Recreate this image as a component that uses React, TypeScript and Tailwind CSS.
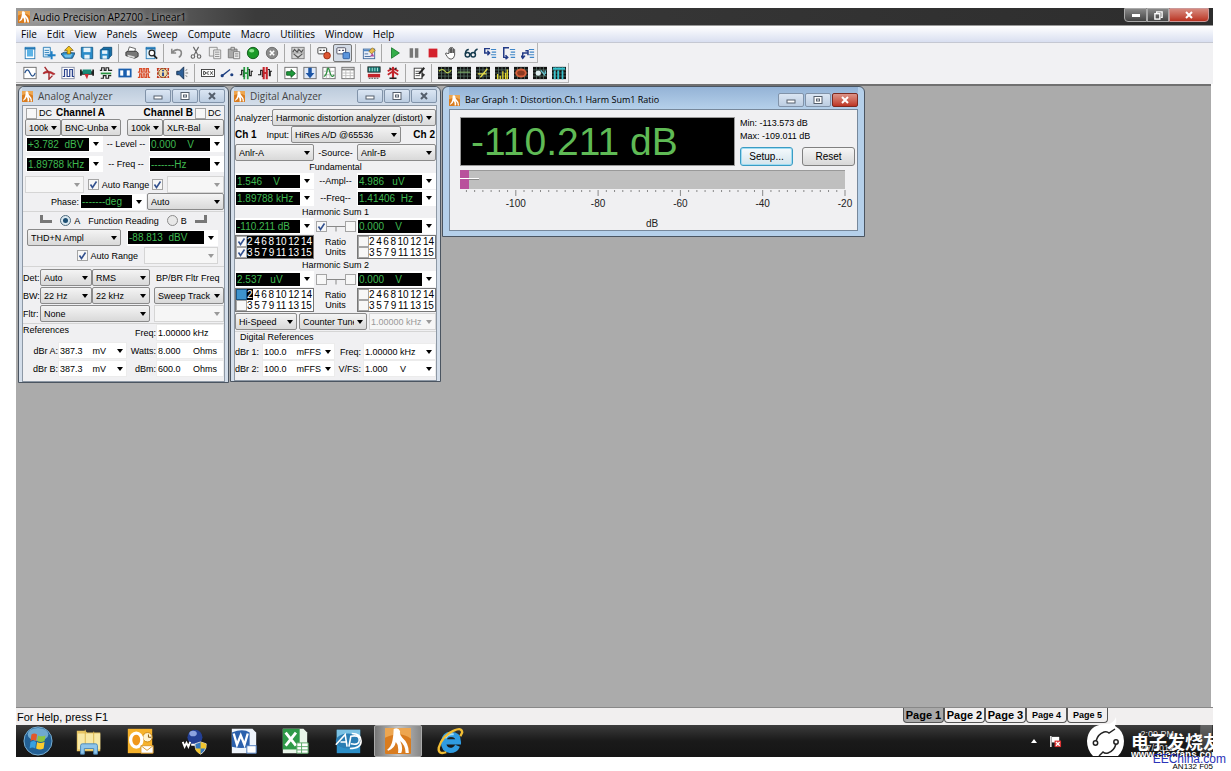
import { FC, ReactNode } from "react";

/* ---------- toolbar glyphs, all drawn on a 16x16 grid ---------- */

const Frame: FC<{ fill?: string, stroke?: string, children?: ReactNode }> = ({ fill = "#fff", stroke = "#666", children }) => (
  <g fill="none">
    <rect x="1" y="1.5" width="14" height="13" fill={fill} stroke={stroke} />
    {children}
  </g>
);

const Scope: FC<{ children: ReactNode }> = ({ children }) => (
  <g fill="none">
    <rect x="0" y="1" width="16" height="14" fill="#111" />
    <path d="M0 4.5h16M0 8h16M0 11.5h16M4 1v14M8 1v14M12 1v14" stroke="#5d7a6c" strokeWidth=".8" />
    {children}
  </g>
);

const Steps: FC<{ arrow: string }> = ({ arrow }) => (
  <g fill="none">
    <path d="M9 4h6M10 7h5M9 10h6M10 13h5" stroke="#3f86c8" strokeWidth="1.4" />
    <path d={arrow} stroke="#223a86" strokeWidth="1.7" />
  </g>
);

const glyphs: Record<string, ReactNode> = {
  New: <g><rect x="2.5" y="1.5" width="11" height="13" fill="#fff" stroke="#2378b5" /><rect x="4.5" y="4" width="7" height="8" fill="#5bb3e6" /><path d="M2 3h12" stroke="#2378b5" strokeWidth="2" /></g>,
  "New test": <g><path d="M1.5 1.5h8v11h-8z" fill="#dff1fb" stroke="#2378b5" /><path d="M3 5h5M3 7.500h5M3 10h4" stroke="#2378b5" /><path d="M11 6v9M6.500 10.500h9" stroke="#1f7fc4" strokeWidth="2.200" /></g>,
  Open: <g><path d="M0 9l4-2 12 1-3 6H4z" fill="#2b8cc9" stroke="#1b4e78" /><path d="M3 10l10-1-2 4H5z" fill="#6fc1ec" /><path d="M9 0l5 5h-3v4H7V5H4z" fill="#f3c21b" stroke="#6f550c" strokeWidth=".8" /></g>,
  Save: <g><path d="M1.500 1.500h13v13h-11l-2-2z" fill="#2b8cc9" stroke="#155c8d" /><rect x="4" y="2" width="8" height="5" fill="#e5f3fb" /><rect x="5" y="10" width="6" height="4.500" fill="#e5f3fb" /></g>,
  "Save all": <g><path d="M5 1.500h9.500v9l-3 3V4.500H2z" fill="#176ea6" stroke="#0f4d78" /><path d="M1.500 4.500h10v10h-10z" fill="#2b8cc9" stroke="#155c8d" /><rect x="3.500" y="5" width="6" height="4" fill="#e5f3fb" /><rect x="4" y="11" width="5" height="3.500" fill="#e5f3fb" /></g>,
  Print: <g><path d="M5 1l7 2-1 4H3z" fill="#fff" stroke="#555" /><path d="M1 7l3-1h9l2 2v4l-4 2-10-3z" fill="#777" stroke="#333" /><path d="M3 10l8 2v2l-8-2z" fill="#ddd" /></g>,
  Preview: <g><rect x="2.500" y="1.500" width="10" height="13" fill="#dff1fb" stroke="#2378b5" /><path d="M2 3h11" stroke="#2378b5" strokeWidth="2" /><circle cx="9" cy="8" r="3.200" fill="#fff" stroke="#222" strokeWidth="1.400" /><path d="M11 10.500l4 4" stroke="#222" strokeWidth="2" /></g>,
  Undo: <path d="M2 3v5h5M2.500 7.500C6 3 13 3 13 8c0 2-1 4-3 5" fill="none" stroke="#888" strokeWidth="1.800" />,
  Cut: <g fill="none" stroke="#666" strokeWidth="1.300"><path d="M5 1l5 9M11 1L6 10" /><circle cx="4.500" cy="12" r="2" /><circle cx="11.500" cy="12" r="2" /></g>,
  Copy: <g fill="#eee" stroke="#888"><path d="M1.500 1.500h9v10h-9z" /><path d="M6.500 4.500h8v10h-8z" /><path d="M8 7h5M8 9.500h5M8 12h5" /></g>,
  Paste: <g fill="#aaa" stroke="#777"><path d="M1.500 3.500h10v10h-10z" /><path d="M4.500 1.500h4v3h-4z" fill="#ccc" /><path d="M7.500 6.500h7v8h-7z" fill="#eee" /><path d="M9 9h4M9 11.500h4" /></g>,
  Record: <g><circle cx="8" cy="8" r="6.500" fill="#1c9a28" stroke="#0c5315" /><ellipse cx="6.500" cy="5.500" rx="3" ry="2" fill="#8fe38f" /></g>,
  Cancel: <g><circle cx="8" cy="8" r="6.500" fill="#8b8b8b" stroke="#666" /><path d="M5.500 5.500l5 5M10.500 5.500l-5 5" stroke="#fff" strokeWidth="1.800" /></g>,
  Regulate: <Frame fill="#d4d4d4" stroke="#777"><path d="M1 8h14M8 2v6" stroke="#999" /><path d="M2 7l2-3 3 3 2-3 3 3 2-3M3 9l5 4 5-4" stroke="#555" strokeWidth="1.400" /></Frame>,
  "Learn macro": <g><rect x="1" y="2" width="10" height="7" rx="1" fill="#fff" stroke="#333" /><path d="M3 5h2M7 5h2" stroke="#333" strokeWidth="1.500" /><circle cx="11.500" cy="11" r="3.800" fill="#dc5633" stroke="#9a2d14" /></g>,
  "Edit macro": <g><rect x="1" y="2" width="10" height="7" rx="1" fill="#fff" stroke="#445" /><path d="M3 5h2M7 5h2" stroke="#335" strokeWidth="1.500" /><rect x="8" y="7.500" width="7.500" height="7" rx="1" fill="#5c95dc" stroke="#2b5a9e" /></g>,
  Properties: <g><rect x="1.500" y="3.500" width="13" height="11" fill="#e8eef8" stroke="#3c6599" /><path d="M2 5h12" stroke="#4d86c5" strokeWidth="2" /><path d="M3 9h4M3 12h7" stroke="#3c6599" /><path d="M8 6l4-4 3 3-4 4z" fill="#e8bd4e" stroke="#8a6a1c" strokeWidth=".8" /><path d="M9 12l3-4 2 4z" fill="#b04a9c" /></g>,
  Run: <path d="M4 2l9 6-9 6z" fill="#35ae4a" stroke="#1c7a2f" />,
  Pause: <path d="M3 2.500h4v11H3zM9 2.500h4v11H9z" fill="#777" />,
  Stop: <rect x="3" y="3" width="10" height="10" fill="#d4202c" />,
  Hand: <path d="M4.500 8.500V3.500q1-1.500 1.500 0V8 2q1-1.500 1.700 0v6V2.500q1-1.500 1.700 0V8 4q1-1.300 1.600 0v6.500q-.5 4-4 4.500-3 .2-4.500-3l-2-3q.2-2 2-.5z" fill="#fff" stroke="#444" />,
  Watch: <g fill="none" stroke="#163b4e" strokeWidth="1.700"><circle cx="4" cy="10" r="2.600" /><circle cx="10.500" cy="10" r="2.600" /><path d="M1.500 9Q2 4 5.500 4M12.500 9q-1-4 3-5.500M6.500 9.500h1.500" /></g>,
  "Step into": <Steps arrow="M8 3H2v5h5M5 5.500L7.500 8 5 10.500" />,
  "Step out": <Steps arrow="M8 2H2v11h4M4 10.500L6.500 13 4 15" />,
  "Step over": <Steps arrow="M8 8H2v6M5 5.500h3v5M0 11l2 3 2.500-3" />,
  "Analog generator": <Frame><path d="M2 8q3-7 6 0t6 0" stroke="#234f8c" strokeWidth="1.400" /></Frame>,
  "Analog analyzer": <g><path d="M1 8Q6 3 15 9l-2 1Q7 6 2 9z" fill="#c4272c" stroke="#8f1d20" strokeWidth=".6" /><path d="M3 1l5 7v7l4-4" stroke="#a3292c" strokeWidth="1.600" fill="none" /></g>,
  "Digital generator": <Frame stroke="#8088a0"><path d="M2 12h2V4h3v8h3V4h3v8h2" stroke="#29418c" strokeWidth="1.400" /></Frame>,
  "Digital analyzer": <g><path d="M0 4h2v2h12V4h2v7h-2v-1H2v1H0z" fill="#222" /><rect x="3" y="4" width="10" height="5" fill="#1a8a78" /><path d="M5 9l3 6 2-6" fill="#d12c33" /></g>,
  "Digital I/O": <g fill="none"><path d="M1 5h2V2h3v3h2V2h3v3h4" stroke="#222" strokeWidth="1.300" /><path d="M2 8.500h12" stroke="#27913f" strokeWidth="2" /><path d="M2 14h3v-3h3v3h3v-3h3" stroke="#222" strokeWidth="1.300" /></g>,
  Sync: <g fill="#fff" stroke="#1b5fae" strokeWidth="2"><rect x="1.500" y="4" width="5.500" height="8" /><rect x="9" y="4" width="5.500" height="8" /></g>,
  Jitter: <g fill="none" stroke="#d94d2a" strokeWidth="1.400"><path d="M1 7h2V3h2v4h2V3h2v4h2V3h2v4h2" /><path d="M1 13h2V9h2v4h2V9h2v4h2V9h2v4h2" /></g>,
  Status: <g><path d="M1 3h14M1 13h14M2 3v10M14 3v10" stroke="#c43b22" strokeWidth="1.700" strokeDasharray="3 1" /><circle cx="8" cy="8" r="5" fill="#f0d9a6" stroke="#82501b" /><path d="M8 4.500v1.500M8 7.500v4" stroke="#1c3d94" strokeWidth="2" /></g>,
  Speaker: <g><path d="M2 6h3l5-5v14l-5-5H2z" fill="#2e5f97" stroke="#142f50" /><path d="M12 5l2-1M12 8h3M12 11l2 1" stroke="#666" /></g>,
  DCX: <g fill="none" stroke="#333"><rect x=".5" y="4" width="15" height="8" fill="#fff" /><path d="M3 6v4q2.500-.5 2.500-2T3 6M9 6.500q-2.500 0-2.500 1.500T9 9.500M10.500 6l3 4M13.500 6l-3 4" /></g>,
  Switcher: <g><circle cx="2.500" cy="11" r="1.800" fill="#1d3f80" /><circle cx="13.500" cy="10" r="1.800" fill="#1d3f80" /><path d="M2.500 11l9-7" stroke="#1d3f80" strokeWidth="1.500" /></g>,
  "Compute left": <g fill="none"><path d="M1 10h2V5h2v7h2M10 4h2v7h2V6h2" stroke="#222" strokeWidth="1.300" /><path d="M6 1v14M10 1v14M6 8h4" stroke="#26983f" strokeWidth="2" /></g>,
  "Compute right": <g fill="none"><path d="M0 10h3V5h2v7h1M11 4h2v7h1V6h2" stroke="#222" strokeWidth="1.300" /><path d="M6.500 1v14M10 1v14M6 8h4" stroke="#c4242b" strokeWidth="2.400" /></g>,
  Sweep: <Frame><path d="M3 6.500h5V4l5 4.500L8 13v-2.500H3z" fill="#1d9a3b" stroke="#0e5a20" /></Frame>,
  Settling: <Frame fill="#dfe9f8"><path d="M6 2h4v6h3l-5 6-5-6h3z" fill="#1c55a5" /></Frame>,
  Graph: <Frame><path d="M5 2v12M9 2v12M2 6h12M2 10h12" stroke="#bbb" /><path d="M2 12q3-1 4-7t3 2 5 3" stroke="#2c8f3e" strokeWidth="1.400" /></Frame>,
  "Data editor": <Frame><path d="M1 4h14" stroke="#888" strokeWidth="2" /><path d="M5.500 4v10M10.500 4v10M1 8h14M1 11h14" stroke="#bbb" /></Frame>,
  "Bar graph": <g><rect x="1" y="1" width="14" height="6" fill="#167d78" stroke="#222" /><path d="M3 2v4M6 2v4M9 2v4M12 2v4" stroke="#bfe8e4" /><path d="M1 11h14" stroke="#c4242b" strokeWidth="4" /><path d="M2 14h12" stroke="#333" strokeDasharray="2 1" /></g>,
  Attached: <g fill="none"><path d="M8 1v14" stroke="#c4242b" strokeWidth="2.500" /><path d="M2 6q6-5 12 0M2 10l6-4 6 4" stroke="#c4242b" strokeWidth="2" /><path d="M4 2l2 2M12 2l-2 2M4 14h8" stroke="#222" strokeWidth="1.500" /></g>,
  "Log file": <g><rect x="2.500" y="2.500" width="9" height="12" fill="#fff" stroke="#333" /><path d="M4 6h5M4 8.500h5M4 11h5" stroke="#444" /><path d="M14 2L8 9" stroke="#222" strokeWidth="2.200" /><path d="M11 7l4 3-4 4z" fill="#333" /></g>,
  "Quick sweep 1": <Scope><path d="M1 6q4-4 7 0t7-1" stroke="#c2d44e" strokeWidth="1.300" /></Scope>,
  "Quick sweep 2": <Scope><path d="M1 7h14" stroke="#7faf68" strokeWidth="1.300" /></Scope>,
  "Quick sweep 3": <Scope><path d="M2 9h10M5 13l8-10" stroke="#ece34e" strokeWidth="1.600" /></Scope>,
  "Quick sweep 4": <Scope><path d="M3 15V9M6 15v-4M9 15V6M12 15V8M14 15V4" stroke="#e8dc30" strokeWidth="1.500" /></Scope>,
  "Quick sweep 5": <Scope><ellipse cx="8" cy="8" rx="5.500" ry="4" fill="#8c3a20" stroke="#d8603a" strokeWidth="2.200" /></Scope>,
  "Quick sweep 6": <Scope><circle cx="6" cy="8" r="3" fill="#dfeff0" /><path d="M9 5l5 6M14 5v4" stroke="#64c1cc" strokeWidth="1.600" /></Scope>,
  "Quick sweep 7": <Scope><path d="M1 3h14" stroke="#35c3cf" strokeWidth="2.500" /><path d="M3 5v10M7 5v10M12 5v10" stroke="#35c3cf" strokeWidth="2" /></Scope>,
};

const mainBar = [
  ["New", "New test", "Open", "Save", "Save all"],
  ["Print", "Preview"],
  ["Undo", "Cut", "Copy", "Paste", "Record", "Cancel"],
  ["Regulate"],
  ["Learn macro", "Edit macro"],
  ["Properties"],
  ["Run", "Pause", "Stop", "Hand", "Watch", "Step into", "Step out", "Step over"],
];

const panelBar = [
  ["Analog generator", "Analog analyzer", "Digital generator", "Digital analyzer", "Digital I/O", "Sync", "Jitter", "Status", "Speaker"],
  ["DCX", "Switcher", "Compute left", "Compute right"],
  ["Sweep", "Settling", "Graph", "Data editor"],
  ["Bar graph", "Attached"],
  ["Log file"],
  ["Quick sweep 1", "Quick sweep 2", "Quick sweep 3", "Quick sweep 4", "Quick sweep 5", "Quick sweep 6", "Quick sweep 7"],
];

const Toolbar: FC<{ groups: string[][], label: string }> = ({ groups, label }) => (
  <div role="toolbar" aria-label={label} className="flex h-5 w-fit items-center border-r border-b border-[#b5b5b5] pl-1">
    {groups.map((group, i) => (
      <div key={i} className="mr-[3px] flex h-[18px] items-center border-r border-[#a8a8a8] pr-[3px] last:mr-0 last:border-r-0 last:pr-0">
        {group.map((name) => (
          <button
            key={name}
            aria-label={name}
            aria-pressed={name === "Edit macro"}
            className="flex h-[18px] w-[19px] items-center justify-center rounded-xs aria-pressed:border aria-pressed:border-[#777] aria-pressed:bg-[#d3dbe6]"
          >
            <svg viewBox="0 0 16 16" className="size-[14px] shrink-0">{glyphs[name]}</svg>
          </button>
        ))}
      </div>
    ))}
  </div>
);

/* ---------- small controls ---------- */

const Arrow: FC<{ className?: string }> = ({ className = "" }) => (
  <svg viewBox="0 0 6 4" className={`pointer-events-none h-1 w-[6px] shrink-0 ${className}`}>
    <path d="M0 0h6L3 4z" fill="currentColor" />
  </svg>
);

const Pick: FC<{ label: string, value: string, className?: string }> = ({ label, value, className = "" }) => (
  <span className={`grid min-w-0 items-center ${className}`}>
    <select
      aria-label={label}
      className="col-start-1 row-start-1 h-[17px] w-full min-w-0 appearance-none overflow-hidden rounded-[2px] border border-[#8a8a8a] bg-linear-to-b from-[#f4f4f4] to-[#d9d9d9] pr-3 pl-[3px] text-[9px]"
    >
      <option>{value}</option>
    </select>
    <Arrow className="col-start-1 row-start-1 mr-1 justify-self-end" />
  </span>
);

// value box with the unit menu on its right
const Reading: FC<{ label: string, value: string }> = ({ label, value }) => (
  <span className="flex h-4 min-w-0 items-center bg-white pl-px">
    <input aria-label={label} defaultValue={value} className="h-[13px] min-w-0 flex-1 bg-black px-px text-[10px] text-[#3fb950]" />
    <button aria-label={`${label} unit`} className="flex h-full w-[14px] shrink-0 items-center justify-center"><Arrow /></button>
  </span>
);

const Field: FC<{ label: string, value: string, menu?: boolean, disabled?: boolean }> = ({ label, value, menu, disabled }) => (
  <span className={disabled ? "flex h-[17px] min-w-0 items-center border border-[#d5d5d5] bg-[#f6f6f6] text-[#999]" : "flex h-[17px] min-w-0 items-center border border-[#ececec] bg-white"}>
    <input aria-label={label} defaultValue={value} disabled={disabled} className="h-full min-w-0 flex-1 bg-transparent pl-px text-[9px]" />
    {menu && (
      <button aria-label={`${label} unit`} disabled={disabled} className="flex h-full w-[12px] shrink-0 items-center justify-center"><Arrow /></button>
    )}
  </span>
);

const Tick: FC<{ label: string, on?: boolean, active?: boolean }> = ({ label, on, active }) => (
  <span className="grid size-[11px] shrink-0">
    <input
      type="checkbox"
      aria-label={label}
      defaultChecked={on}
      className={active
        ? "peer col-start-1 row-start-1 size-[11px] appearance-none border border-[#1c5685] bg-[#3e93cd]"
        : "peer col-start-1 row-start-1 size-[11px] appearance-none border border-[#a5a5a5] bg-[#f7f7f7]"}
    />
    <svg viewBox="0 0 11 11" className="pointer-events-none col-start-1 row-start-1 hidden size-[11px] peer-checked:block">
      <path d="M2.500 5.500L4.500 8.500L8.500 2.500" fill="none" stroke="#33518f" strokeWidth="1.600" />
    </svg>
  </span>
);

const Radio: FC<{ label: string, on?: boolean }> = ({ label, on }) => (
  <label className="flex items-center gap-[3px]">
    <span className="grid size-[11px]">
      <input
        type="radio"
        name="reading"
        defaultChecked={on}
        className="peer col-start-1 row-start-1 size-[11px] appearance-none rounded-full border border-[#8c8c8c] bg-[#e8e8e8] checked:border-[#4f6b7d] checked:bg-[#dbe9f1]"
      />
      <span className="pointer-events-none col-start-1 row-start-1 m-[3px] hidden size-[5px] rounded-full bg-[#1d4f73] peer-checked:block" />
    </span>
    {label}
  </label>
);

const RunnerIcon: FC<{ className: string }> = ({ className }) => (
  <svg viewBox="0 0 24 24" className={className}>
    <rect width="24" height="24" rx="1" fill="#d97c1f" />
    <path d="M0 0h24v10Q14 2 0 9z" fill="#eda650" />
    <path d="M8 1q4-2 6 2-1 3 2 6 6 5 6 14h-3q0-7-5-11 3 6 1 11h-3q1-7-2-10-1 6-7 8l-1-1q4-3 5-9 1-5 1-10z" fill="#fff" />
  </svg>
);

const Caption: FC<{ kind: "min" | "max" | "close", hot?: boolean }> = ({ kind, hot }) => (
  <button
    aria-label={kind}
    className={hot
      ? "flex h-[14px] w-[26px] items-center justify-center rounded-[2px] border border-[#7c2a20] bg-linear-to-b from-[#dc9388] to-[#bd3423] text-white"
      : "flex h-[14px] w-[26px] items-center justify-center rounded-[2px] border border-[#8193a9] bg-linear-to-b from-[#dbe6f3] to-[#bccde1] text-[#555f6c]"}
  >
    <svg viewBox="0 0 10 8" className="h-2 w-[10px]" fill="#fff" stroke="currentColor">
      {kind === "min" && <rect x="1" y="4" width="8" height="3" />}
      {kind === "max" && <><rect x="1" y=".5" width="8" height="7" /><rect x="3.500" y="3" width="3" height="2" /></>}
      {kind === "close" && <path d="M2 1l6 6M8 1L2 7" strokeWidth={2} />}
    </svg>
  </button>
);

const Child: FC<{ title: string, active?: boolean, className: string, children: ReactNode }> = ({ title, active, className, children }) => (
  <section
    data-active={active}
    className={`rounded-t-md border border-[#4b5561] bg-[#d4deea] px-[3px] data-[active=true]:bg-[#b5d0ea] data-[active=true]:px-[6px] ${className}`}
  >
    <header className={active
      ? "flex h-[22px] items-center gap-[5px] bg-linear-to-b from-[#94b3d6] to-[#b5d0ea] pt-1 font-['Open_Sans',sans-serif] text-[9px] text-black"
      : "flex h-[18px] items-center gap-[5px] bg-linear-to-b from-[#bccbdc] to-[#d4deea] font-['Open_Sans',sans-serif] text-[10px] text-[#444]"}>
      <RunnerIcon className="size-[11px]" />
      <h2 className="flex-1 whitespace-nowrap">{title}</h2>
      <div className="flex gap-px">
        <Caption kind="min" />
        <Caption kind="max" />
        <Caption kind="close" hot={active} />
      </div>
    </header>
    {children}
  </section>
);

/* ---------- analog analyzer ---------- */

const AnalogPanel: FC = () => (
  <div className="border border-[#8d98a5] bg-[#f0f0f2] pt-px">
    <div className="flex h-3 items-center justify-between px-[3px]">
      <span className="flex items-center gap-[2px]"><Tick label="DC channel A" />DC <b className="ml-[2px] text-[10px]">Channel A</b></span>
      <span className="flex items-center gap-[2px]"><b className="text-[10px]">Channel B</b><Tick label="DC channel B" />DC</span>
    </div>
    <div className="grid grid-cols-[36px_60px_36px_1fr] pl-[2px]">
      <Pick label="Impedance A" value="100k" />
      <Pick label="Input A" value="BNC-Unbal" />
      <Pick label="Impedance B" value="100k" className="ml-[6px] w-[36px]" />
      <Pick label="Input B" value="XLR-Bal" className="ml-[6px]" />
    </div>
    <div className="grid grid-cols-[77px_1fr_75px] items-center gap-y-1 pl-[3px] text-center">
      <Reading label="Level A" value="+3.782  dBV" />
      <span>-- Level --</span>
      <Reading label="Level B" value="0.000    V" />
      <Reading label="Frequency A" value="1.89788 kHz" />
      <span>-- Freq --</span>
      <Reading label="Frequency B" value="-------Hz" />
    </div>
    <div className="mt-1 grid grid-cols-[59px_1fr_57px] items-center pl-[2px]">
      <Field label="Range A" value="" menu disabled />
      <span className="flex items-center justify-center gap-[3px]">
        <Tick label="Auto range A" on />Auto Range<Tick label="Auto range B" on />
      </span>
      <Field label="Range B" value="" menu disabled />
    </div>
    <div className="grid grid-cols-[56px_66px_1fr] items-center gap-x-px">
      <span className="text-right">Phase:</span>
      <Reading label="Phase" value="-------deg" />
      <Pick label="Phase mode" value="Auto" />
    </div>
    <div className="mt-px flex h-[18px] items-center justify-center gap-2 border-t border-[#d5d5d5]">
      <span className="mb-1 h-2 w-3 border-b-3 border-l-3 border-[#777]" />
      <Radio label="A" on />
      <span>Function Reading</span>
      <Radio label="B" />
      <span className="mb-1 h-2 w-3 border-r-3 border-b-3 border-[#777]" />
    </div>
    <div className="grid grid-cols-[94px_1fr] items-center gap-x-[6px] pr-[6px] pl-1">
      <Pick label="Function" value="THD+N Ampl" />
      <Reading label="Function reading" value="-88.813  dBV" />
    </div>
    <div className="mt-px grid grid-cols-[1fr_74px] items-center gap-x-[6px] pr-[6px]">
      <span className="flex items-center justify-end gap-[2px]"><Tick label="Auto range reading" on />Auto Range</span>
      <Field label="Function range" value="" menu disabled />
    </div>
    <div className="mt-[2px] grid grid-cols-[17px_52px_58px_1fr] items-center gap-y-px border-t border-[#d5d5d5] pt-[2px]">
      <span>Det:</span>
      <Pick label="Detector rate" value="Auto" />
      <Pick label="Detector" value="RMS" />
      <span className="pl-[6px] whitespace-nowrap">BP/BR Fltr Freq</span>
      <span>BW:</span>
      <Pick label="Bandwidth low" value="22 Hz" />
      <Pick label="Bandwidth high" value="22 kHz" />
      <Pick label="Filter frequency mode" value="Sweep Track" className="ml-1" />
      <span>Fltr:</span>
      <Pick label="Filter" value="None" className="col-span-2" />
      <span className="ml-1 grid"><Field label="Filter frequency" value="" menu disabled /></span>
    </div>
    <div className="mt-px grid grid-cols-[35px_69px_29px_1fr] items-center gap-y-px border-t border-[#d5d5d5] pb-1 text-right">
      <span className="col-span-2 self-start text-left">References</span>
      <span>Freq:</span>
      <Field label="Reference frequency" value="1.00000 kHz" />
      <span>dBr A:</span>
      <Field label="dBr A" value="387.3    mV" menu />
      <span>Watts:</span>
      <Field label="Watts" value="8.000     Ohms" />
      <span>dBr B:</span>
      <Field label="dBr B" value="387.3    mV" menu />
      <span>dBm:</span>
      <Field label="dBm" value="600.0     Ohms" />
    </div>
  </div>
);

/* ---------- digital analyzer ---------- */

const EVEN = ["2", "4", "6", "8", "10", "12", "14"];
const ODD = ["3", "5", "7", "9", "11", "13", "15"];

const Harmonics: FC<{ name: string, all?: boolean, second?: boolean }> = ({ name, all, second }) => (
  <div className="border border-[#777]">
    {[EVEN, ODD].map((row, i) => (
      <div key={i} className="flex h-[11px] items-center overflow-hidden">
        <Tick label={`${name} ${i ? "odd" : "even"}`} on={all} active={second && !i} />
        <div className={all
          ? "flex flex-1 justify-between bg-black pr-px text-[10px] leading-[11px] text-white"
          : "flex flex-1 justify-between bg-white pr-px text-[10px] leading-[11px]"}>
          {row.map((n) => (
            <span key={n} className={second && n === "2" ? "bg-black text-white" : ""}>{n}</span>
          ))}
        </div>
      </div>
    ))}
  </div>
);

const HarmonicSum: FC<{ n: number, left: string, on?: boolean }> = ({ n, left, on }) => (
  <>
    <h3 className="col-span-3 leading-[10px]">Harmonic Sum {n}</h3>
    <Reading label={`Sum ${n} channel 1`} value={left} />
    <span className="flex items-center justify-center">
      <Tick label={`Sum ${n} on channel 1`} on={on} />
      <svg viewBox="0 0 18 11" className="h-[11px] w-[18px]"><path d="M0 5.500h18M9 5.500v5" stroke="#888" /></svg>
      <Tick label={`Sum ${n} on channel 2`} />
    </span>
    <Reading label={`Sum ${n} channel 2`} value="0.000    V" />
    <Harmonics name={`Sum ${n} channel 1`} all={n === 1} second={n === 2} />
    <span className="leading-[10px]">Ratio<br />Units</span>
    <Harmonics name={`Sum ${n} channel 2`} />
  </>
);

const DigitalPanel: FC = () => (
  <div className="border border-[#8d98a5] bg-[#f0f0f2] pt-[3px]">
    <div className="grid grid-cols-[37px_1fr] items-center">
      <span>Analyzer:</span>
      <Pick label="Analyzer" value="Harmonic distortion analyzer (distort)" />
    </div>
    <div className="grid grid-cols-[56px_110px_1fr] items-center">
      <span className="flex items-center justify-between pr-[2px]"><b className="text-[10px]">Ch 1</b>Input:</span>
      <Pick label="Input" value="HiRes A/D @65536" />
      <b className="pr-px text-right text-[10px]">Ch 2</b>
    </div>
    <div className="mt-px grid grid-cols-[79px_1fr_79px] items-center gap-y-px text-center">
      <Pick label="Source 1" value="Anlr-A" />
      <span>-Source-</span>
      <Pick label="Source 2" value="Anlr-B" />
      <h3 className="col-span-3 leading-[10px]">Fundamental</h3>
      <Reading label="Amplitude 1" value="1.546    V" />
      <span>--Ampl--</span>
      <Reading label="Amplitude 2" value="4.986   uV" />
      <Reading label="Frequency 1" value="1.89788 kHz" />
      <span>--Freq--</span>
      <Reading label="Frequency 2" value="1.41406  Hz" />
      <HarmonicSum n={1} left="-110.211 dB" on />
      <HarmonicSum n={2} left="2.537   uV" />
    </div>
    <div className="mt-px grid grid-cols-[62px_68px_1fr] items-center gap-x-[2px]">
      <Pick label="Speed" value="Hi-Speed" />
      <Pick label="Tuning" value="Counter Tuned" />
      <Field label="Tuning frequency" value="1.00000 kHz" menu disabled />
    </div>
    <h3 className="mt-px border-t border-[#d5d5d5] pl-[5px] leading-[11px]">Digital References</h3>
    <div className="grid grid-cols-[27px_73px_28px_1fr] items-center pb-[3px] text-right">
      <span className="text-left">dBr 1:</span>
      <Field label="dBr 1" value="100.0    mFFS" menu />
      <span className="pr-[2px]">Freq:</span>
      <Field label="Digital frequency" value="1.00000 kHz" menu />
      <span className="text-left">dBr 2:</span>
      <Field label="dBr 2" value="100.0    mFFS" menu />
      <span className="pr-[2px]">V/FS:</span>
      <Field label="Volts full scale" value="1.000     V" menu />
    </div>
  </div>
);

/* ---------- bar graph ---------- */

const SCALE = Array.from({ length: 47 }, (_, i) => -20 - i * 2);
const toX = (db: number) => 385 + (db + 20) * 4.115;

const BarGraph: FC = () => (
  <div className="mb-[5px] border border-[#77889b] bg-[#f0f0f2] pt-[7px] pl-[10px]">
    <div className="flex gap-[5px]">
      <output className="flex h-[49px] w-[275px] items-center border border-[#999] bg-black pl-[10px] text-[39px] text-[#5fba55]">-110.211 dB</output>
      <div>
        <p className="leading-[13px]">Min: -113.573 dB</p>
        <p className="leading-[13px]">Max: -109.011 dB</p>
        <div className="mt-1 flex gap-[9px]">
          <button className="h-[19px] w-[53px] rounded-[3px] border border-[#3a9cc4] bg-linear-to-b from-[#f5fafd] to-[#d3e4ec] text-[10px] ring-1 ring-[#9fdcf2] ring-inset">Setup...</button>
          <button className="h-[19px] w-[53px] rounded-[3px] border border-[#808080] bg-linear-to-b from-[#f6f6f6] to-[#d8d8d8] text-[10px]">Reset</button>
        </div>
      </div>
    </div>
    <svg viewBox="0 0 396 60" className="mt-1 h-[60px] w-[396px]" fontSize="10" textAnchor="middle">
      <rect width="385" height="19" fill="#bfbfbf" />
      <path d="M0 .5h385" stroke="#999" />
      <rect width="9" height="19" fill="#b9509c" />
      <path d="M0 8.500h19" stroke="#fff" />
      <path d="M9 9.500h10" stroke="#888" />
      {SCALE.map((db) => (
        <path key={db} d={`M${toX(db)} 20v${db % 20 ? 2 : 6}`} stroke="#888" />
      ))}
      {[-100, -80, -60, -40, -20].map((db) => (
        <text key={db} x={toX(db)} y="37" fill="#222">{db}</text>
      ))}
      <text x="192" y="57" fill="#222">dB</text>
    </svg>
  </div>
);

/* ---------- taskbar ---------- */

const pinned: { name: string, cell: string, art: ReactNode }[] = [
  { name: "Start", cell: "w-11", art: (
    <>
      <circle cx="16" cy="16" r="15" fill="#225f94" stroke="#7fb5d8" />
      <ellipse cx="16" cy="9" rx="11" ry="7" fill="#6fa9cf" />
      <path d="M9 9q3-2 6 0l-1 7q-3-2-6 0z" fill="#e2582b" />
      <path d="M16 10q3 2 8 0l-1 6q-4 2-8 0z" fill="#8cc63f" />
      <path d="M8 17q3-2 6 0l-1 7q-3-2-6 0z" fill="#38a0e0" />
      <path d="M15 17q3 2 8 0l-1 7q-4 2-8 0z" fill="#fccb2d" />
    </>
  ) },
  { name: "Explorer", cell: "w-[57px]", art: (
    <>
      <path d="M3 5h9l2 2h14v20H3z" fill="#e8c664" />
      <path d="M4 8h24v17H4z" fill="#f8e9a6" />
      <path d="M12 4v19M21 6v17" stroke="#d9b44d" />
      <path d="M7 30v-9q0-2 2-2h14q2 0 2 2v9h-4v-6H11v6z" fill="#8fc5ea" stroke="#4a87b9" />
    </>
  ) },
  { name: "Outlook", cell: "w-[46px]", art: (
    <>
      <rect x="3" y="3" width="26" height="26" fill="#f6b22c" />
      <circle cx="24" cy="12" r="5" fill="#fff3cf" stroke="#c98512" />
      <path d="M25 9v3h3" stroke="#805000" fill="none" />
      <ellipse cx="12" cy="15" rx="6" ry="7.5" fill="#f0981c" stroke="#fff" strokeWidth="3.500" />
      <path d="M17 21h13v8H17z" fill="#fff" stroke="#d8992a" />
      <path d="M17 21l6.500 5 6.500-5" fill="none" stroke="#d8992a" />
    </>
  ) },
  { name: "Network", cell: "w-[62px]", art: (
    <>
      <circle cx="17" cy="12" r="8" fill="#233f94" />
      <ellipse cx="15" cy="8" rx="4" ry="3" fill="#8ba2df" />
      <path d="M4 17l2 5 2-4 2 4 2-5M13 20h4" fill="none" stroke="#fff" strokeWidth="2" />
      <path d="M17 19l6-2 6 2q0 8-6 11-6-3-6-11z" fill="#3478bd" stroke="#ddd" />
      <path d="M23 17v7h6l0-5zM23 24v6q-5-2-6-6z" fill="#f2c52f" />
    </>
  ) },
  { name: "Word", cell: "w-[38px]", art: (
    <>
      <path d="M3 3h22l4 4v22H3z" fill="#eef4fb" />
      <path d="M3 7q12-5 19 0v15q-8 3-19 0z" fill="#2c61ad" />
      <path d="M5 8l3.500 12 4-10 4 10L20 8" fill="none" stroke="#fff" strokeWidth="2.500" />
      <path d="M19 21h10v8H19z" fill="#fff" stroke="#4a7abc" />
    </>
  ) },
  { name: "Excel", cell: "w-16", art: (
    <>
      <path d="M3 3h22l4 4v22H3z" fill="#eaf6ea" />
      <path d="M3 3h18v22H3z" fill="#2f9a48" />
      <path d="M6 7l11 14M17 7L6 21" stroke="#fff" strokeWidth="3" />
      <path d="M18 18h12v11H18z" fill="#fff" stroke="#5aa866" />
      <path d="M18 22h12M18 25.500h12M23 18v11" stroke="#5aa866" />
    </>
  ) },
  { name: "AP", cell: "w-[42px]", art: (
    <>
      <rect x="4" y="4" width="25" height="25" fill="#2c8fc8" />
      <path d="M4 4h25v8q-12-3-25 5z" fill="#7cc2e4" />
      <ellipse cx="16" cy="16" rx="13" ry="8" fill="#2a7db3" />
      <path d="M3 20L13 9l2 13M8 17h7M17 22l2-11q9-2 9 4t-9 4M20 8q10 0 10 8t-12 8" fill="none" stroke="#fff" strokeWidth="1.700" />
    </>
  ) },
];

const Taskbar: FC = () => (
  <footer className="flex h-8 items-center bg-linear-to-b from-[#3c3c3c] via-[#1a1a1a] to-[#151515]">
    {pinned.map(({ name, cell, art }) => (
      <button key={name} aria-label={name} className={`flex justify-center ${cell}`}>
        <svg viewBox="0 0 32 32" className="size-[30px]">{art}</svg>
      </button>
    ))}
    <button aria-label="Audio Precision" className="ml-[5px] flex h-8 w-12 items-center justify-center rounded-xs border border-[#aaa] bg-linear-to-r from-[#777] via-[#c4c4c4] to-[#888]">
      <RunnerIcon className="size-[26px]" />
    </button>
    <button aria-label="Internet Explorer" className="flex w-14 justify-center">
      <svg viewBox="0 0 32 32" className="size-[30px]" fill="none">
        <path d="M24 21q-2 5-8 5-7-1-7-9 1-8 8-8 8 0 8 8H10" stroke="#2f9be0" strokeWidth="5.500" />
        <path d="M11 13q3-5 9-4" stroke="#a4dcf8" strokeWidth="2" />
        <path d="M12 28Q3 31 4 23 8 10 20 5q9-4 9 2l-2 4" stroke="#f1bd34" strokeWidth="2.500" />
      </svg>
    </button>
    <div className="ml-auto flex items-center gap-3 overflow-hidden">
      <button aria-label="Show hidden icons"><Arrow className="rotate-180 text-white" /></button>
      <svg viewBox="0 0 14 14" className="size-[13px]">
        <path d="M2 1v12" stroke="#fff" strokeWidth="1.500" />
        <path d="M3 2h8v6H3z" fill="#fff" />
        <path d="M6 6h7v7H6z" fill="#d33" />
        <path d="M7.500 7.500l4 4M11.500 7.500l-4 4" stroke="#fff" strokeWidth="1.400" />
      </svg>
      <time className="w-[126px] pr-[26px] text-right text-[9px] leading-[14px] text-[#ddd]">2:09 PM<br />2/7/2012</time>
      <span className="-mx-3 h-8 w-3 border-l border-[#555] bg-linear-to-b from-[#666] to-[#2a2a2a]" />
      <span className="w-px" />
    </div>
  </footer>
);

// site marks laid over the corner of the taskbar
const Marks: FC = () => (
  <div className="pointer-events-none absolute right-0 bottom-0 h-[54px] w-[145px]">
    <svg viewBox="0 0 40 42" className="absolute top-0 left-0 h-[42px] w-10" fill="none">
      <path d="M30 0q1 5-1 9 9 5 9 15 0 9-6 15H7Q1 33 1 24 2 8 19 7q8 1 11-7z" fill="#fff" />
      <path d="M10 24q2-7 8-9 3-1 5 1l6-4M30 27q-2 7-8 9-3 1-5-1l-4 4" stroke="#222" strokeWidth="1.500" />
      <circle cx="9.500" cy="26" r="2.200" stroke="#222" strokeWidth="1.500" />
      <circle cx="30" cy="25" r="2.200" stroke="#222" strokeWidth="1.500" />
    </svg>
    <div className="absolute top-[15px] left-[45px] h-[25px] w-[82px] overflow-hidden whitespace-nowrap text-white">
      <p className="font-['Noto_Sans_CJK_SC',sans-serif] text-[18px] leading-[18px] font-bold">电子发烧友</p>
      <p className="text-[10px] leading-[10px] font-bold">www.elecfans.com</p>
    </div>
    <p className="absolute top-[34px] right-[5px] text-[12px] leading-4 text-[#2b33b8]">EEChina.com</p>
    <p className="absolute right-[18px] bottom-0 text-[8px] leading-[9px]">AN132 F05</p>
  </div>
);

const App: FC = () => (
  <div className="relative flex min-h-screen flex-col overflow-hidden bg-white pt-2 pr-[18px] pb-[14px] pl-4 font-['Liberation_Sans',Arial,sans-serif] text-[9px] leading-3 text-black">
    <header className="flex h-[18px] items-center gap-[3px] border-b border-[#999] bg-linear-to-r from-[#9a9a9a] via-[#3b3b3b] via-20% to-[#2d2d2d] pr-1 pl-[2px] font-['Open_Sans',sans-serif] text-[10px]">
      <RunnerIcon className="size-3" />
      <h1 className="flex-1 text-shadow-[0_0_4px_#ddd]">Audio Precision AP2700 - Linear1</h1>
      <div className="flex self-start text-white">
        <button aria-label="Minimize" className="flex h-[14px] w-[23px] items-center justify-center rounded-bl-sm border border-[#aaa] bg-linear-to-b from-[#888] to-[#444]">
          <span className="h-[3px] w-2 bg-white" />
        </button>
        <button aria-label="Restore" className="flex h-[14px] w-[22px] items-center justify-center border border-[#aaa] bg-linear-to-b from-[#888] to-[#444]">
          <svg viewBox="0 0 10 10" className="size-[9px]" fill="none" stroke="#fff" strokeWidth="1.500"><path d="M3 2.500V1h6v6H7.500" /><rect x="1" y="3" width="5.500" height="6" /></svg>
        </button>
        <button aria-label="Close" className="flex h-[14px] w-10 items-center justify-center rounded-br-sm border border-[#c99] bg-linear-to-b from-[#d6897e] to-[#b9301f]">
          <svg viewBox="0 0 8 8" className="size-2"><path d="M1 1l6 6M7 1L1 7" stroke="#fff" strokeWidth="2" /></svg>
        </button>
      </div>
    </header>
    <nav className="flex h-[17px] items-center gap-[10px] border-b border-[#c5c8d2] bg-linear-to-b from-white to-[#d9dff0] pl-[5px] font-['Open_Sans',sans-serif] text-[10px]">
      {["File", "Edit", "View", "Panels", "Sweep", "Compute", "Macro", "Utilities", "Window", "Help"].map((item) => (
        <button key={item}>{item}</button>
      ))}
    </nav>
    <div className="bg-[#f1f1f3] pb-px">
      <Toolbar groups={mainBar} label="Standard" />
      <Toolbar groups={panelBar} label="Panels" />
    </div>
    <main className="mr-[2px] flex flex-1 items-start gap-px border-t-2 border-[#707070] bg-[#ababab] pl-[2px]">
      <Child title="Analog Analyzer" className="w-[211px] shrink-0"><AnalogPanel /></Child>
      <Child title="Digital Analyzer" className="w-[211px] shrink-0"><DigitalPanel /></Child>
      <Child title="Bar Graph 1: Distortion.Ch.1 Harm Sum1 Ratio" active className="w-[423px] shrink-0"><BarGraph /></Child>
    </main>
    <div className="flex h-[18px] items-start justify-between border-t border-[#888] bg-[#f1efef]">
      <p className="pt-[3px] pl-px text-[11px]">For Help, press F1</p>
      <div role="tablist" className="mr-[105px] flex font-bold">
        {["Page 1", "Page 2", "Page 3", "Page 4", "Page 5"].map((page, i) => (
          <button
            key={page}
            role="tab"
            aria-selected={i === 0}
            className={i < 3
              ? "h-[15px] w-[41px] rounded-b-sm border border-t-0 border-[#555] text-[11px] whitespace-nowrap aria-selected:bg-[#a9a9a9]"
              : "h-[15px] w-[41px] rounded-b-sm border border-t-0 border-[#555] text-[9px]"}
          >
            {page}
          </button>
        ))}
      </div>
    </div>
    <Taskbar />
    <Marks />
  </div>
);

export default App;
